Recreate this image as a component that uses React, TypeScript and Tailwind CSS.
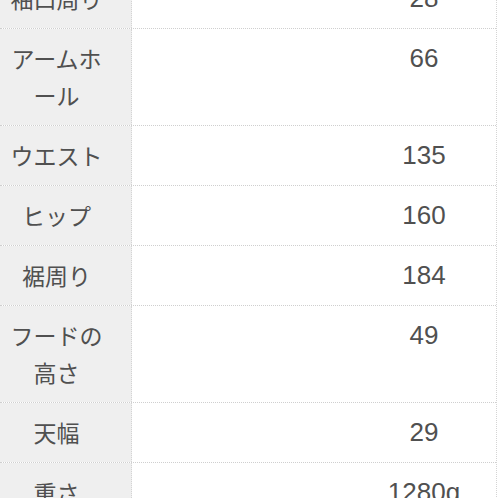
const rows = [
  { label: '袖口周り', value: '28' },
  { label: 'アームホール', value: '66' },
  { label: 'ウエスト', value: '135' },
  { label: 'ヒップ', value: '160' },
  { label: '裾周り', value: '184' },
  { label: 'フードの高さ', value: '49' },
  { label: '天幅', value: '29' },
  { label: '重さ', value: '1280g' },
]

export default function App() {
  return (
    <div
      className="h-[498px] w-[498px] overflow-hidden bg-white text-[#505050]"
      style={{ fontFamily: '"Noto Sans CJK JP", "Noto Sans", sans-serif' }}
    >
      {/* table is scrolled: first row sits partly above the top edge */}
      <div className="-mt-[31px] w-[497px] border-r border-dotted border-[#d4d4d4]">
        {rows.map((row) => (
          <div
            key={row.label}
            className="grid grid-cols-[132px_1fr] border-b border-dotted border-[#cfcfcf]"
          >
            <div className="border-r border-dotted border-[#d4d4d4] bg-[#efefef] py-[11px] pl-[6px] pr-[24px] text-center text-[23px] leading-[37px]">
              {row.label}
            </div>
            <div
              className="py-[11px] pl-[220px] text-center text-[26px] leading-[37px]"
              style={{ fontFamily: '"Liberation Sans", Arial, sans-serif' }}
            >
              {row.value}
            </div>
          </div>
        ))}
      </div>
    </div>
  )
}
